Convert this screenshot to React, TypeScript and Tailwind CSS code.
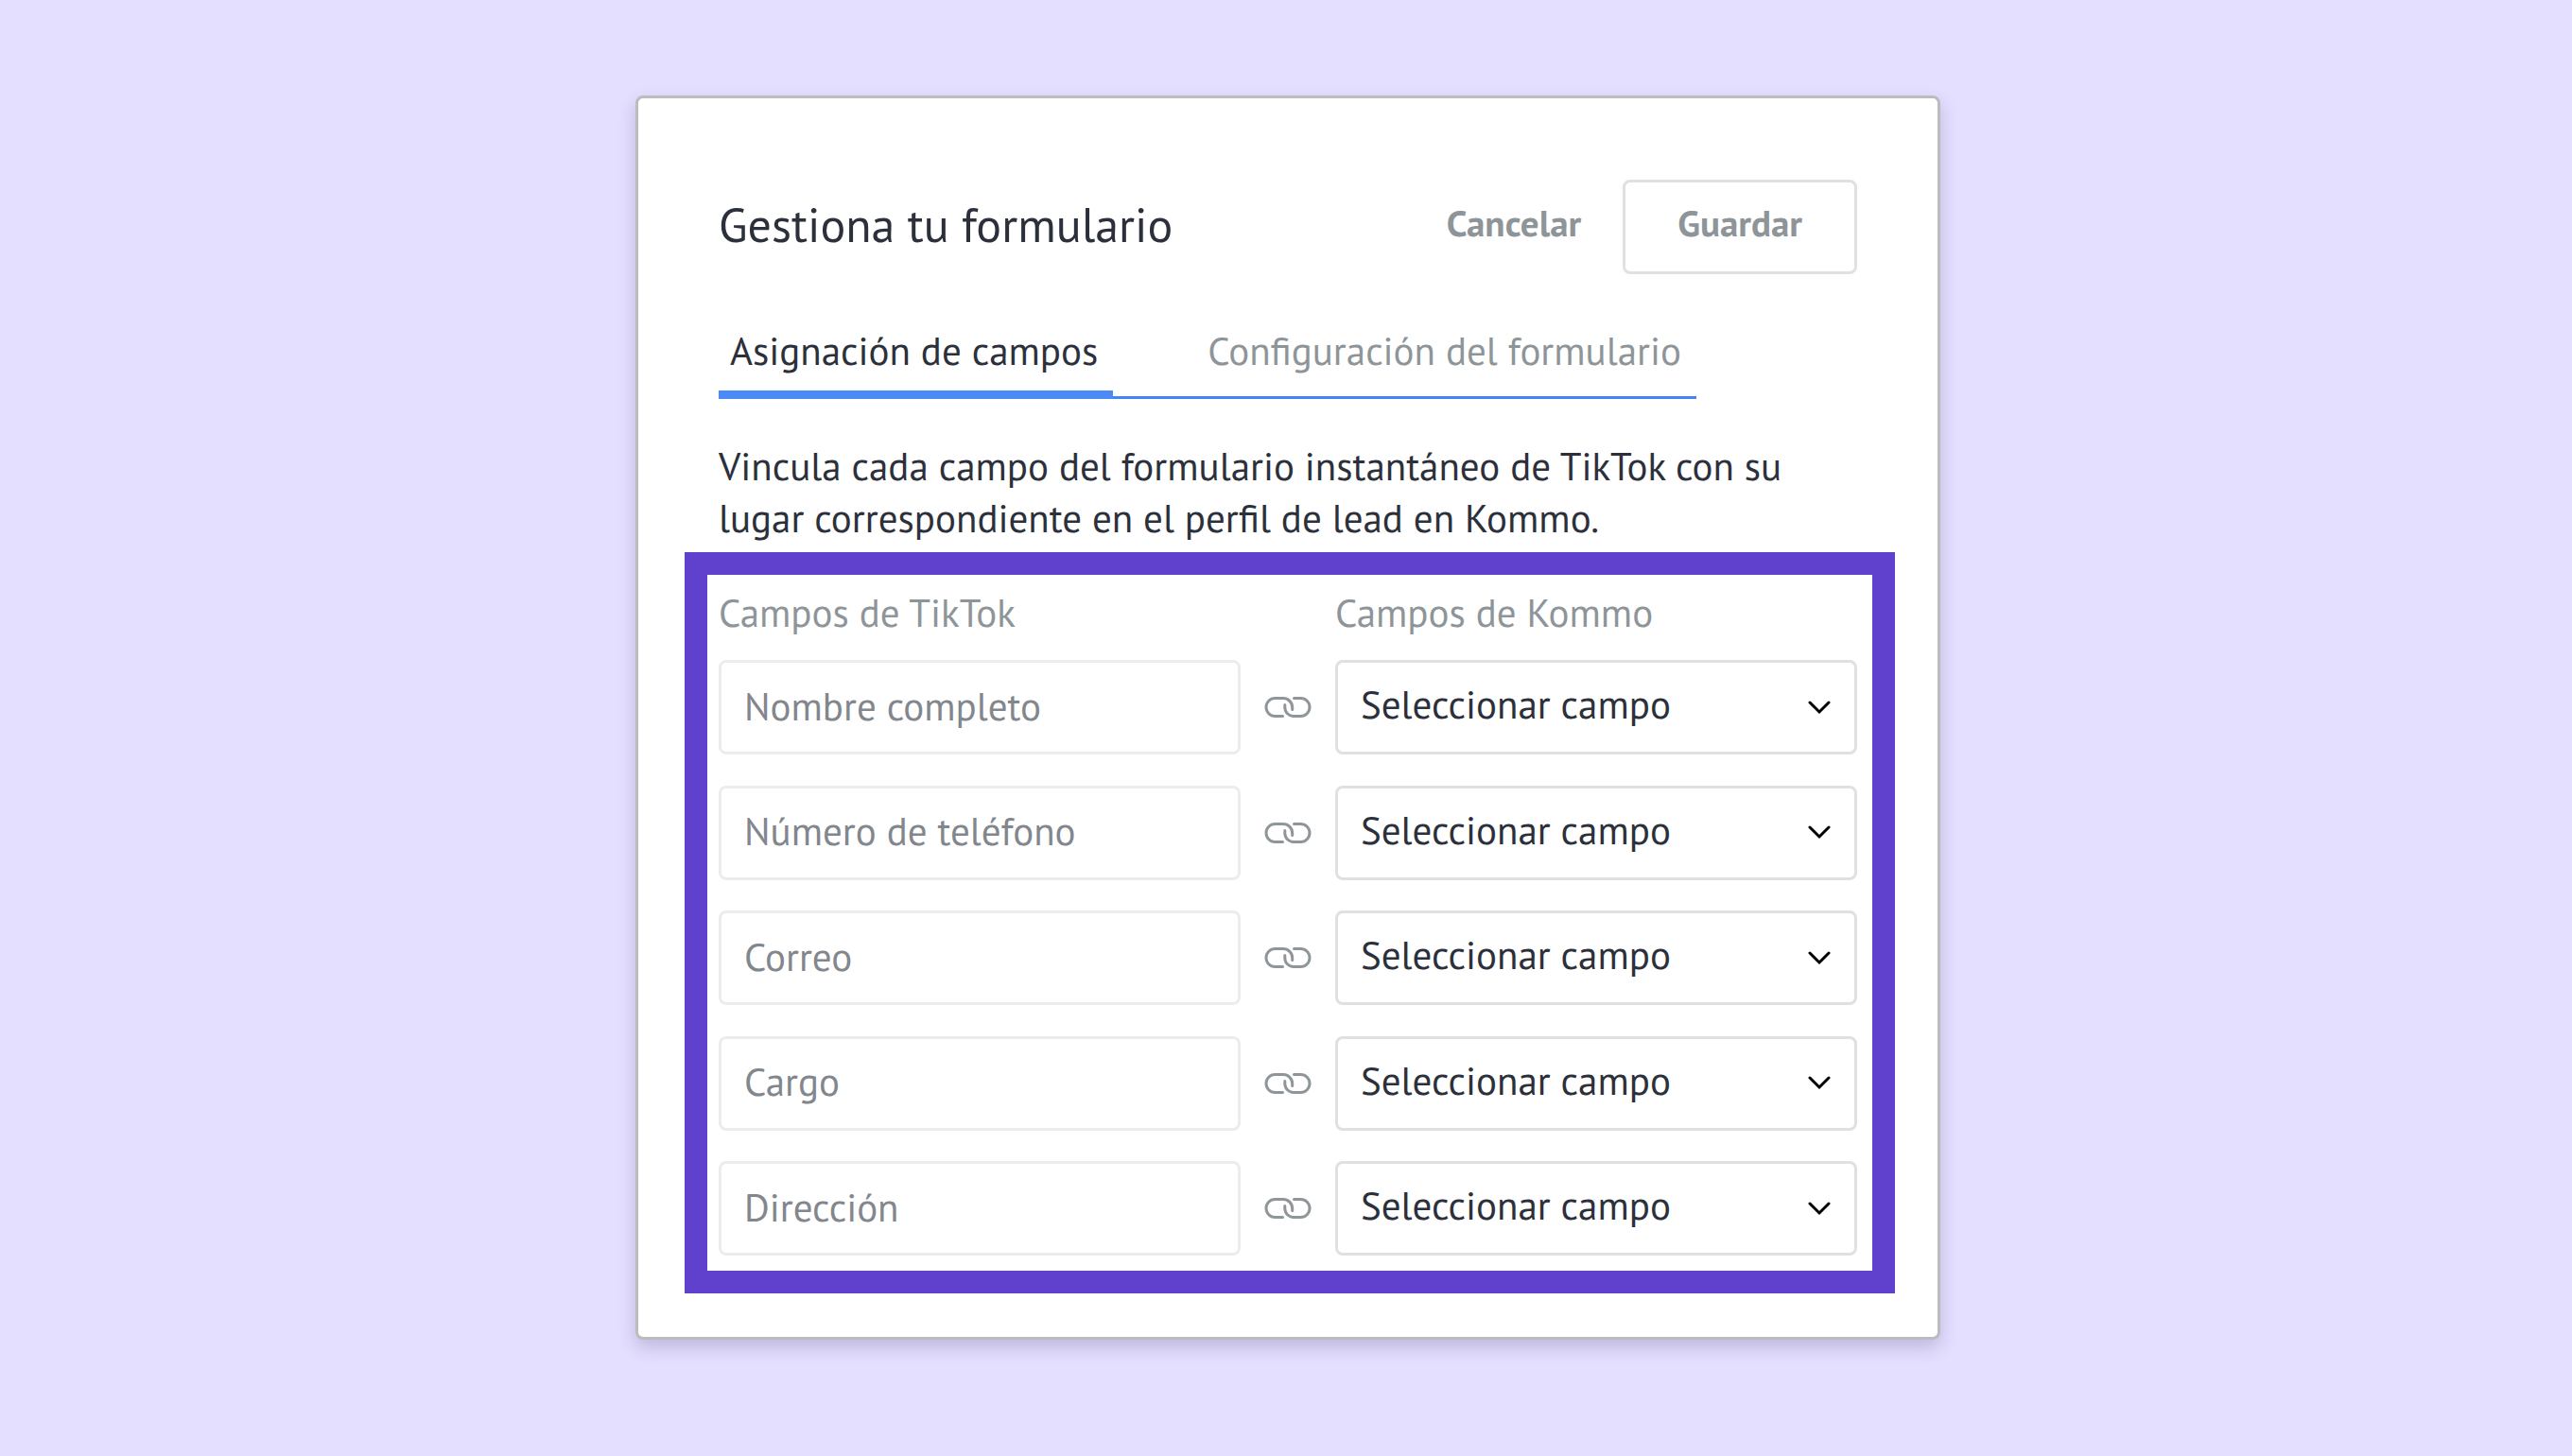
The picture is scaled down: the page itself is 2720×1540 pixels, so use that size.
const fields = [
  "Nombre completo",
  "Número de teléfono",
  "Correo",
  "Cargo",
  "Dirección",
];

function LinkIcon() {
  return (
    <svg
      width="50"
      height="24"
      viewBox="0 0 50 24"
      fill="none"
      stroke="#8e969a"
      strokeWidth="3"
      strokeLinecap="round"
      aria-hidden="true"
    >
      <path d="M19.5 21.5H11.5A9.5 9.5 0 0 1 11.5 2.5H20A9.7 9.7 0 0 1 29.7 12.2V14.5" />
      <path d="M31.5 2.5H38.5A9.5 9.5 0 0 1 38.5 21.5H31A9.2 9.2 0 0 1 21.8 12.3V9.5" />
    </svg>
  );
}

function ChevronIcon() {
  return (
    <svg
      width="24"
      height="15"
      viewBox="0 0 24 15"
      fill="none"
      stroke="#000"
      strokeWidth="3"
      strokeLinecap="round"
      className="pointer-events-none col-start-1 row-start-1 mr-7 self-center justify-self-end"
      aria-hidden="true"
    >
      <path d="M2 2L12 12L22 2" />
    </svg>
  );
}

function Header() {
  return (
    <header className="flex h-25 items-center justify-between">
      <h1 className="pb-1 text-[50px] leading-[60px]">
        Gestiona tu formulario
      </h1>
      <div className="flex h-full text-[39px] font-bold text-[#8e9599]">
        <button type="button" className="px-11 pb-2">
          Cancelar
        </button>
        <button
          type="button"
          className="rounded-lg border-3 border-[#e0e0e0] px-[55px] pb-2"
        >
          Guardar
        </button>
      </div>
    </header>
  );
}

function Tabs() {
  return (
    <div
      role="tablist"
      className="mt-[57px] flex w-fit gap-22 leading-12 shadow-[inset_0_-3px_0_#4385f5]"
    >
      <button
        type="button"
        role="tab"
        aria-selected="true"
        className="border-b-9 border-[#4c8bf7] pr-4 pb-[18px] pl-3"
      >
        Asignación de campos
      </button>
      <button
        type="button"
        role="tab"
        aria-selected="false"
        className="pr-4 pb-[27px] pl-3 text-[#8e9599]"
      >
        Configuración del formulario
      </button>
    </div>
  );
}

function FieldRow({ name }: Readonly<{ name: string }>) {
  return (
    <div className="grid grid-cols-[1fr_100px_1fr] items-center">
      <input
        readOnly
        value={name}
        aria-label={`Campo de TikTok: ${name}`}
        className="h-25 w-full min-w-0 rounded-lg border-3 border-[#ececec] px-6 pb-1 text-[#82868d] outline-none"
      />
      <span className="justify-self-center">
        <LinkIcon />
      </span>
      <div className="grid min-w-0">
        <select
          aria-label={`Campo de Kommo para ${name}`}
          className="col-start-1 row-start-1 h-25 w-full appearance-none rounded-lg border-3 border-[#e0e0e0] bg-white px-6 pb-1.5"
        >
          <option>Seleccionar campo</option>
        </select>
        <ChevronIcon />
      </div>
    </div>
  );
}

function FieldMapping() {
  return (
    <section className="mt-[9px] -mr-10 -ml-9 border-24 border-[#5f41ce] pt-4 pr-4 pb-4 pl-3">
      <div className="grid grid-cols-[1fr_100px_1fr] leading-12 text-[#8e9599]">
        <h2>Campos de TikTok</h2>
        <h2 className="col-start-3">Campos de Kommo</h2>
      </div>
      <div className="mt-[26px] flex min-h-[630px] flex-col justify-between">
        {fields.map((name) => (
          <FieldRow key={name} name={name} />
        ))}
      </div>
    </section>
  );
}

export default function App() {
  return (
    <div className="min-h-screen bg-[#e4dfff] pt-[101px] pb-10 pl-1 font-['PT_Sans',Lato,sans-serif] text-[41px] text-[#2b303b]">
      <main className="mx-auto w-full max-w-[1380px] rounded-lg border-3 border-[#bcbcc0] bg-white px-[85px] pt-[86px] pb-[46px] shadow-[0_8px_18px_rgba(60,50,100,0.22)]">
        <Header />
        <Tabs />
        <p className="mt-[43px] leading-[55px]">
          Vincula cada campo del formulario instantáneo de TikTok con su lugar
          correspondiente en el perfil de lead en Kommo.
        </p>
        <FieldMapping />
      </main>
    </div>
  );
}
